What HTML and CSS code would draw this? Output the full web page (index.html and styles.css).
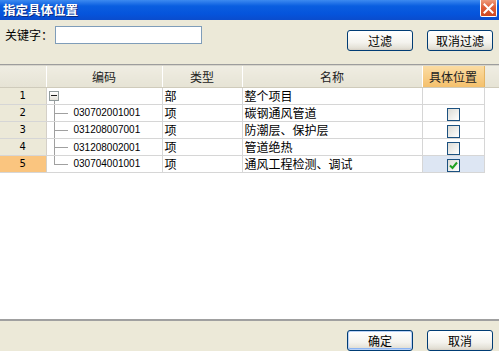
FILE: index.html
```
<!DOCTYPE html>
<html lang="zh">
  <head>
    <meta charset="UTF-8" />
    <title>指定具体位置</title>
    <link rel="stylesheet" href="styles.css">
  </head>
  <body>
    <div class="window">
      <div class="titlebar">
        <span class="title">指定具体位置</span>
        <span class="close">
          <svg width="11" height="11" viewBox="0 0 11 11">
            <path d="M1.5 1.5 L9.5 9.5 M9.5 1.5 L1.5 9.5" stroke="#fff" stroke-width="2" stroke-linecap="square" />
          </svg>
        </span>
      </div>

      <!-- filter bar -->
      <div class="toolbar">
        <label class="kw-label">关键字：</label>
        <input class="kw-input" type="text" />
        <span class="spacer"></span>
        <button class="btn">过滤</button>
        <button class="btn">取消过滤</button>
      </div>

      <!-- grid -->
      <div class="grid">
        <table class="tbl">
          <thead>
            <tr>
              <th class="c-num"></th>
              <th class="c-code">编码</th>
              <th class="c-type">类型</th>
              <th class="c-name">名称</th>
              <th class="c-pos active">具体位置</th>
              <th class="c-fill"></th>
            </tr>
          </thead>
          <tbody>
            <tr>
              <td class="c-num">1</td>
              <td class="c-code">
                <div class="tree root"><span class="toggle"></span></div>
              </td>
              <td>部</td>
              <td>整个项目</td>
              <td class="c-pos"></td>
              <td class="c-fill"></td>
            </tr>
            <tr>
              <td class="c-num">2</td>
              <td class="c-code"><div class="tree mid">030702001001</div></td>
              <td>项</td>
              <td>碳钢通风管道</td>
              <td class="c-pos"><span class="chk"></span></td>
              <td class="c-fill"></td>
            </tr>
            <tr>
              <td class="c-num">3</td>
              <td class="c-code"><div class="tree mid">031208007001</div></td>
              <td>项</td>
              <td>防潮层、保护层</td>
              <td class="c-pos"><span class="chk"></span></td>
              <td class="c-fill"></td>
            </tr>
            <tr>
              <td class="c-num">4</td>
              <td class="c-code"><div class="tree mid">031208002001</div></td>
              <td>项</td>
              <td>管道绝热</td>
              <td class="c-pos"><span class="chk"></span></td>
              <td class="c-fill"></td>
            </tr>
            <tr class="current">
              <td class="c-num">5</td>
              <td class="c-code"><div class="tree last">030704001001</div></td>
              <td>项</td>
              <td>通风工程检测、调试</td>
              <td class="c-pos">
                <span class="chk on">
                  <svg width="9" height="9" viewBox="0 0 9 9">
                    <path d="M1 4.5 L3.5 7 L8 1.5" fill="none" stroke="#21a121" stroke-width="2" />
                  </svg>
                </span>
              </td>
              <td class="c-fill"></td>
            </tr>
          </tbody>
        </table>
      </div>

      <div class="footer">
        <button class="btn default">确定</button>
        <button class="btn">取消</button>
      </div>
    </div>
  </body>
</html>
```

FILE: styles.css
```
* {
  margin: 0;
  padding: 0;
  box-sizing: border-box;
}

body {
  font-family: "Noto Sans CJK SC", "DejaVu Sans", sans-serif;
  font-size: 12px;
  color: #000;
  background: #ece9d8;
}

.window {
  width: 499px;
  height: 351px;
  display: flex;
  flex-direction: column;
  background: #ece9d8;
  overflow: hidden;
}

/* title bar */
.titlebar {
  height: 20px;
  display: flex;
  align-items: flex-start;
  padding: 0 2px 0 3px;
  background: linear-gradient(#3d8af0, #0a5ee0 30%, #0554dc 70%, #0a4ccd);
}

.title {
  flex: 1;
  color: #fff;
  font-weight: bold;
  font-size: 12.5px;
  line-height: 19px;
  text-shadow: 1px 1px 0 #0a2a80;
}

.close {
  width: 17px;
  height: 17px;
  display: flex;
  align-items: center;
  justify-content: center;
  border: 1px solid #fff;
  border-top: none;
  border-radius: 0 0 2px 2px;
  background: linear-gradient(#ee9c7c, #e0603a 45%, #cc4620);
}

/* filter bar */
.toolbar {
  height: 44px;
  display: flex;
  align-items: flex-start;
  padding: 6px 6px 0 5px;
}

.kw-label {
  line-height: 18px;
  width: 50px;
}

.kw-input {
  width: 147px;
  height: 18px;
  border: 1px solid #7f9db9;
  background: #fff;
}

.spacer {
  flex: 1;
}

.btn {
  width: 66px;
  height: 21px;
  margin-left: 14px;
  font-family: "Noto Sans CJK SC", sans-serif;
  font-size: 12px;
  color: #000;
  border: 1px solid #003c74;
  border-radius: 3px;
  background: linear-gradient(#ffffff, #f4f3ee 60%, #e3e0d6 90%, #d6d0c5);
}

.toolbar .btn {
  margin-top: 4px;
}

.btn.default {
  box-shadow: inset 0 0 0 1px #b9d1f6, inset 0 -1px 0 1px #8cb4f2;
}

/* grid */
.grid {
  flex: 1;
  background: #fff;
  border-top: 1px solid #9d9d9d;
  border-bottom: 2px solid #a0a0a0;
  box-shadow: inset 0 1px 0 #d8d6cc;
  padding-top: 1px;
}

.tbl {
  width: 100%;
  border-collapse: collapse;
  table-layout: fixed;
}

.tbl th {
  height: 21px;
  font-weight: normal;
  text-align: center;
  background: linear-gradient(#efede2, #e6e3d5);
  border-right: 1px solid #fff;
  border-bottom: 1px solid #cfcbbb;
  color: #222;
}

.tbl th.active {
  background: linear-gradient(#fbdca3, #f4c06c);
  border-right-color: #e4b463;
}

.tbl td {
  height: 17px;
  padding: 0 0 0 2px;
  border-right: 1px solid #d6d6d6;
  border-bottom: 1px solid #d6d6d6;
  white-space: nowrap;
  line-height: 16px;
}

.c-num {
  width: 46px;
}

.c-code {
  width: 116px;
}

.c-type {
  width: 80px;
}

.c-name {
  width: 180px;
}

.c-pos {
  width: 62px;
}

.tbl td.c-num {
  padding: 0;
  text-align: center;
  background: #ece9d8;
  border-right-color: #d4d0c8;
  font-family: "DejaVu Sans", sans-serif;
  font-size: 10px;
}

.tbl td.c-code {
  padding: 0;
}

.tbl td.c-pos {
  padding: 0;
  text-align: center;
}

.tbl td.c-fill {
  border: none;
  background: #fff;
}

.tbl th.c-fill {
  border-right: none;
}

.current td.c-num {
  background: #fac57f;
}

.current td.c-pos {
  background: #dde6f3;
}

/* tree lines */
.tree {
  height: 16px;
  display: flex;
  align-items: center;
  padding-left: 27px;
  font-family: "Liberation Sans", sans-serif;
  font-size: 10px;
  background-repeat: no-repeat;
}

.tree.root {
  padding-left: 2px;
  background-image: linear-gradient(#a0a0a0, #a0a0a0);
  background-size: 1px 8px;
  background-position: 7px 100%;
}

.tree.mid {
  background-image: linear-gradient(#a0a0a0, #a0a0a0), linear-gradient(#a0a0a0, #a0a0a0);
  background-size: 1px 17px, 14px 1px;
  background-position: 7px 0, 7px 8px;
}

.tree.last {
  background-image: linear-gradient(#a0a0a0, #a0a0a0), linear-gradient(#a0a0a0, #a0a0a0);
  background-size: 1px 9px, 14px 1px;
  background-position: 7px 0, 7px 8px;
}

.tbl tr td.c-code .tree.mid {
  height: 17px;
  margin-bottom: -1px;
}

.toggle {
  width: 10px;
  height: 10px;
  border: 1px solid #919b9c;
  background: linear-gradient(#fff, #e3e1d8);
  display: flex;
  align-items: center;
  justify-content: center;
}

.toggle::after {
  content: "";
  width: 6px;
  height: 1px;
  background: #1a1a1a;
}

/* checkbox */
.chk {
  display: inline-flex;
  align-items: center;
  justify-content: center;
  width: 13px;
  height: 13px;
  vertical-align: middle;
  border: 1px solid #1c5180;
  background: linear-gradient(135deg, #dcdbd5, #fff);
}

/* bottom buttons */
.footer {
  height: 30px;
  display: flex;
  justify-content: flex-end;
  align-items: flex-start;
  padding: 9px 6px 0 0;
}
```
